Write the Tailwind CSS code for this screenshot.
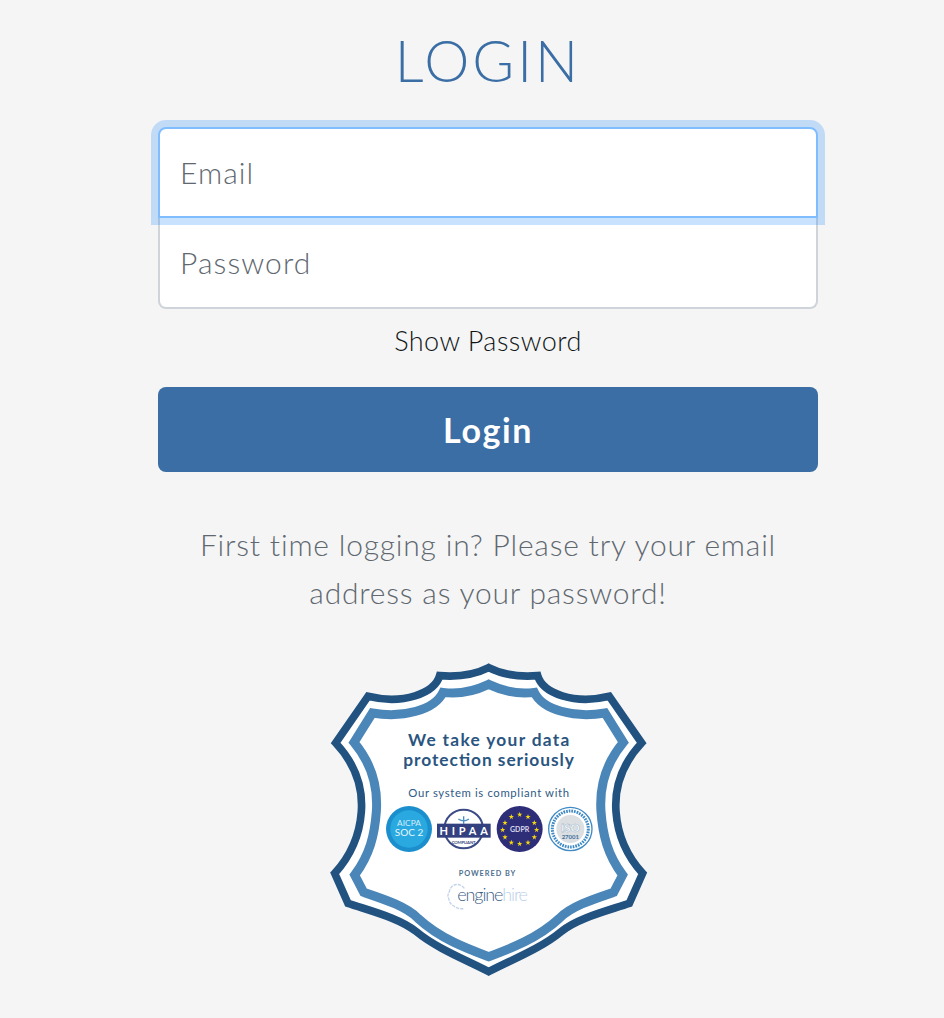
<!DOCTYPE html>
<html lang="en">
<head>
    <meta charset="UTF-8">
    <meta name="viewport" content="width=device-width, initial-scale=1.0">
    <title>Login</title>
    <script src="https://cdn.jsdelivr.net/npm/@tailwindcss/browser@4"></script>
</head>
<body class="min-h-screen bg-[#f5f5f5] font-['Lato',sans-serif] overflow-hidden">
    <div class="pl-8 flex flex-col items-center">
        <h1 class="mt-[24px] h-[72px] leading-[72px] text-[57px] font-light text-[#3a6ea5] tracking-[3px]">LOGIN</h1>

        <form class="w-[660px] mt-[31px] flex flex-col" onsubmit="return false">
            <!-- Email has focus, the ring runs over the top of the password field -->
            <input type="text" placeholder="Email" class="relative z-10 h-[91px] w-full bg-white pl-[20px] pr-[21px] pb-[2px] text-[30px] font-light tracking-[1.1px] text-[#212529] placeholder:text-[#5f6870] border-2 border-[#80bdff] rounded-t-lg outline-none shadow-[0_0_0_7px_rgba(38,143,255,0.25)]">
            <input type="password" placeholder="Password" class="h-[91px] w-full bg-white pl-[20px] pr-[21px] pb-[2px] text-[30px] font-light tracking-[1.1px] text-[#212529] placeholder:text-[#5f6870] border-2 border-t-0 border-[#ced4da] rounded-b-lg outline-none">

            <label class="mt-[14px] h-[36px] leading-[36px] text-center text-[27px] font-light tracking-[0.45px] text-[#111518]">Show Password</label>

            <button class="mt-[28px] h-[85px] w-full rounded-lg bg-[#3a6ea5] text-white text-[34px] font-bold tracking-[1.6px]">Login</button>
        </form>

        <p class="mt-[48px] w-[640px] text-center text-[30px] leading-[48px] font-light tracking-[0.8px] text-[#5f6870]">First time logging in? Please try your email address as your password!</p>

        <svg class="mt-[39px]" width="335" height="330" viewBox="0 0 1005 990" xmlns="http://www.w3.org/2000/svg" font-family="Lato, sans-serif">
            <defs>
                <path id="star" d="M0-8l2 6h6l-5 4 2 6-5-4-5 4 2-6-5-4h6z" fill="#f5d90f"/>
            </defs>
            <path d="M503 38C550 62 600 66 650 62C665 115 760 150 865 124L962 264C900 330 880 400 885 470C890 540 915 600 965 655L925 745C850 770 770 790 720 830C660 880 570 915 503 950C436 915 346 880 286 830C236 790 156 770 81 745L41 655C91 600 116 540 121 470C126 400 106 330 44 264L141 124C246 150 341 115 356 62C406 66 456 62 503 38Z" fill="#fff" stroke="#22527f" stroke-width="23"/>
            <path d="M503 88C550 110 600 118 640 112C665 165 760 190 852 174L907 262C850 330 835 400 840 470C845 540 860 600 905 660L878 712C810 735 750 755 715 790C650 850 570 880 503 905C436 880 356 850 291 790C256 755 196 735 128 712L101 660C146 600 161 540 166 470C171 400 156 330 99 262L154 174C246 190 341 165 366 112C406 118 456 110 503 88Z" fill="#fff" stroke="#4b86b8" stroke-width="27"/>

            <text x="503" y="273" text-anchor="middle" font-size="52" font-weight="700" fill="#2a5580" textLength="484">We take your data</text>
            <text x="503" y="333" text-anchor="middle" font-size="52" font-weight="700" fill="#2a5580" textLength="512">protection seriously</text>
            <text x="503" y="425" text-anchor="middle" font-size="34" fill="#2f5a85" textLength="482">Our system is compliant with</text>

            <!-- SOC 2 -->
            <circle cx="264" cy="522" r="69" fill="#1b8fce"/>
            <circle cx="264" cy="522" r="56" fill="#2aa9e0"/>
            <text x="264" y="513" text-anchor="middle" font-size="25" fill="#d4eefa">AICPA</text>
            <text x="264" y="544" text-anchor="middle" font-size="30" fill="#e8f6fc">SOC 2</text>

            <!-- HIPAA -->
            <circle cx="428" cy="522" r="58" fill="#fff" stroke="#3c4a86" stroke-width="6"/>
            <path d="M428 484v22M412 492c10 7 22 7 32 0" fill="none" stroke="#4a8fc4" stroke-width="4"/>
            <rect x="348" y="506" width="161" height="42" fill="#33407f"/>
            <text x="428" y="539" text-anchor="middle" font-size="33" font-weight="700" fill="#fff" textLength="145">HIPAA</text>
            <text x="428" y="568" text-anchor="middle" font-size="13" font-weight="700" fill="#3c4a86" textLength="72">COMPLIANT</text>

            <!-- GDPR -->
            <circle cx="596" cy="522" r="69" fill="#2e2d78"/>
            <text x="596" y="530" text-anchor="middle" font-size="21" font-weight="700" fill="#d9d9e8">GDPR</text>
            <use href="#star" x="596" y="478"/>
            <use href="#star" x="621" y="485"/>
            <use href="#star" x="640" y="503"/>
            <use href="#star" x="647" y="524"/>
            <use href="#star" x="640" y="546"/>
            <use href="#star" x="621" y="562"/>
            <use href="#star" x="596" y="566"/>
            <use href="#star" x="571" y="562"/>
            <use href="#star" x="552" y="546"/>
            <use href="#star" x="545" y="524"/>
            <use href="#star" x="552" y="503"/>
            <use href="#star" x="571" y="485"/>

            <!-- ISO -->
            <circle cx="748" cy="522" r="65" fill="#fff" stroke="#3f8ac4" stroke-width="4"/>
            <circle cx="748" cy="522" r="54" fill="none" stroke="#3f8ac4" stroke-width="9" stroke-dasharray="5 3"/>
            <circle cx="748" cy="522" r="42" fill="#dcdfe2"/>
            <text x="748" y="531" text-anchor="middle" font-size="34" font-weight="900" fill="#fff" stroke="#6f93b3" stroke-width="1">ISO</text>
            <text x="748" y="552" text-anchor="middle" font-size="18" font-weight="700" fill="#3f6f9c">27001</text>

            <text x="498" y="664" text-anchor="middle" font-size="22" font-weight="700" fill="#4f6f8f" textLength="170">POWERED BY</text>

            <!-- enginehire -->
            <path d="M430 700c-14-18-38-14-44 6-2 10-8 12-4 22 4 8 2 16 12 22 10 8 22 14 36 10" fill="none" stroke="#c5d3ea" stroke-width="4" stroke-dasharray="10 3"/>
            <text x="409" y="738" font-size="54" font-weight="300" fill="#3d5f86" textLength="212">engine<tspan fill="#bccfe8">hire</tspan></text>
        </svg>
    </div>
</body>
</html>
